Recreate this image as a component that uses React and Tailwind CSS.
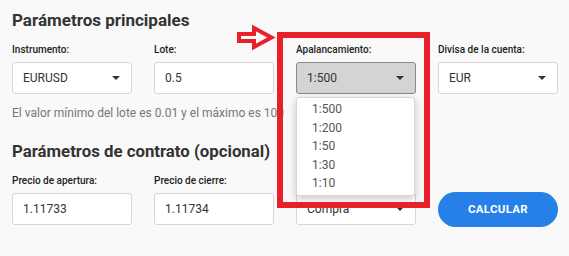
import React from 'react';

const font = { fontFamily: 'Roboto, "Liberation Sans", sans-serif' };

function Caret() {
  return (
    <svg width="8" height="4" viewBox="0 0 8 4" className="shrink-0">
      <path d="M0 0h8L4 4z" fill="#333" />
    </svg>
  );
}

function Field({ label, children }) {
  return (
    <div className="flex flex-col">
      <label className="text-[10px] font-medium text-[#222] leading-[13px] mb-[6px]">{label}</label>
      {children}
    </div>
  );
}

function Input({ value }) {
  return (
    <div className="h-[32px] bg-white border border-[#d6d6d6] rounded-[3px] flex items-center px-[10px] text-[12px] text-[#333]">
      {value}
    </div>
  );
}

function Select({ value, active }) {
  return (
    <div
      className={`h-[32px] border rounded-[3px] flex items-center justify-between pl-[10px] pr-[11px] text-[12px] text-[#333] ${
        active ? 'bg-[#d4d4d4] border-[#8a8a8a]' : 'bg-white border-[#d6d6d6]'
      }`}
    >
      <span>{value}</span>
      <Caret />
    </div>
  );
}

export default function App() {
  const leverages = ['1:500', '1:200', '1:50', '1:30', '1:10'];

  return (
    <div style={font} className="relative w-[569px] h-[256px] bg-[#f9f9f9] overflow-hidden px-3 pt-[9px]">
      <h2 className="text-[17px] font-bold text-[#333] leading-[22px]">Parámetros principales</h2>

      <div className="grid grid-cols-[120px_120px_120px_120px] gap-x-[22px] mt-[12px]">
        <Field label="Instrumento:">
          <Select value="EURUSD" />
        </Field>
        <Field label="Lote:">
          <Input value="0.5" />
        </Field>
        <Field label="Apalancamiento:">
          <div className="relative">
            <Select value="1:500" active />
            {/* open menu */}
            <div className="absolute left-0 top-[35px] w-[119px] bg-white border border-[#d6d6d6] rounded-[3px] shadow-[0_3px_8px_rgba(0,0,0,0.22)] z-10 py-[2px]">
              {leverages.map((l) => (
                <div key={l} className="pl-[15px] h-[18.5px] flex items-center text-[12px] text-[#555]">
                  {l}
                </div>
              ))}
            </div>
          </div>
        </Field>
        <Field label="Divisa de la cuenta:">
          <Select value="EUR" />
        </Field>
      </div>

      <p className="text-[12px] text-[#777] mt-[11px] leading-[16px]">
        El valor mínimo del lote es 0.01 y el máximo es 100
      </p>

      <h2 className="text-[16.8px] font-bold text-[#333] leading-[22px] mt-[19px]">
        Parámetros de contrato (opcional)
      </h2>

      <div className="grid grid-cols-[120px_120px_120px_120px] gap-x-[22px] mt-[12px] items-end">
        <Field label="Precio de apertura:">
          <Input value="1.11733" />
        </Field>
        <Field label="Precio de cierre:">
          <Input value="1.11734" />
        </Field>
        <Field label="Operación:">
          <Select value="Compra" />
        </Field>
        <button className="h-[35px] mb-[-2px] rounded-full bg-[#2680e8] text-white text-[11.5px] font-bold tracking-[0.3px]">
          CALCULAR
        </button>
      </div>

      {/* red highlight box */}
      <div className="absolute left-[277px] top-[32px] w-[153px] h-[176px] border-[6px] border-[#e8202a] z-20 pointer-events-none" />

      {/* red arrow */}
      <svg className="absolute left-[235px] top-[24px] z-20" width="41" height="27" viewBox="0 0 41 27">
        <path
          d="M4 10H19V4L36.5 13.5L19 23V17H4Z"
          fill="none"
          stroke="#e8202a"
          strokeWidth="4"
          strokeLinejoin="miter"
        />
      </svg>
    </div>
  );
}
